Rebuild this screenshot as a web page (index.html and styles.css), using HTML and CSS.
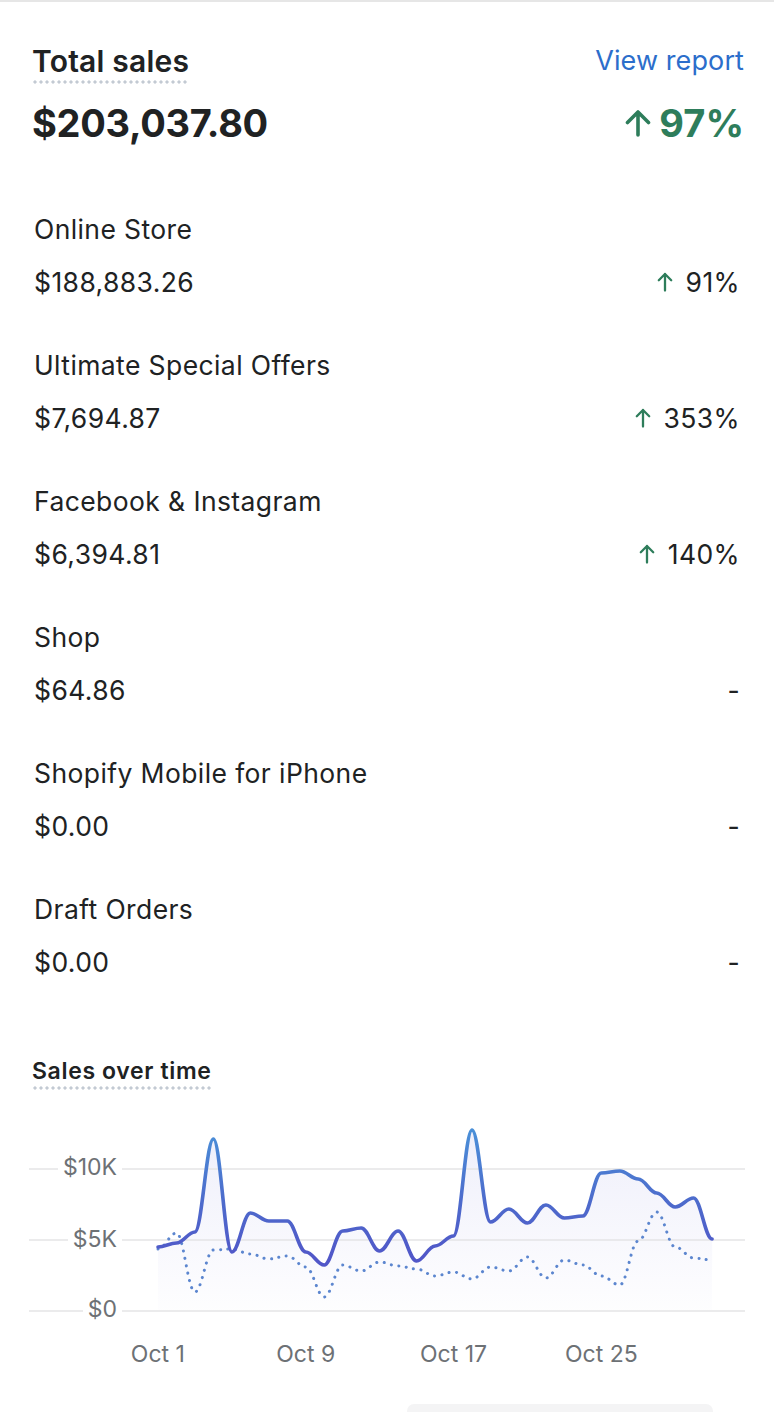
FILE: index.html
```html
<!DOCTYPE html>
<html lang="en">
<head>
<meta charset="utf-8">
<title>Total sales</title>
<link rel="stylesheet" href="styles.css">
</head>
<body>
<div class="topline"></div>
<main class="card">
  <header class="summary">
    <div class="summary-row">
      <h2 class="title dotted">Total sales</h2>
      <a class="link" href="#">View report</a>
    </div>
    <div class="summary-row total-row">
      <span class="total">$203,037.80</span>
      <span class="change-big">
        <svg class="arrow-big" viewBox="0 0 26 28" aria-hidden="true"><path d="M13 26V3M2.5 13.5L13 3l10.5 10.5" fill="none" stroke="currentColor" stroke-width="3.6" stroke-linecap="round" stroke-linejoin="round"/></svg>97%
      </span>
    </div>
  </header>

  <ul class="channels">
    <li class="channel">
      <div class="channel-name">Online Store</div>
      <div class="channel-row"><span>$188,883.26</span><span class="delta"><svg class="arrow" viewBox="0 0 16 20" aria-hidden="true"><path d="M8 18.5V2M1.8 8.2L8 2l6.2 6.2" fill="none" stroke="currentColor" stroke-width="2.3" stroke-linecap="round" stroke-linejoin="round"/></svg>91%</span></div>
    </li>
    <li class="channel">
      <div class="channel-name">Ultimate Special Offers</div>
      <div class="channel-row"><span>$7,694.87</span><span class="delta"><svg class="arrow" viewBox="0 0 16 20" aria-hidden="true"><path d="M8 18.5V2M1.8 8.2L8 2l6.2 6.2" fill="none" stroke="currentColor" stroke-width="2.3" stroke-linecap="round" stroke-linejoin="round"/></svg>353%</span></div>
    </li>
    <li class="channel">
      <div class="channel-name">Facebook &amp; Instagram</div>
      <div class="channel-row"><span>$6,394.81</span><span class="delta"><svg class="arrow" viewBox="0 0 16 20" aria-hidden="true"><path d="M8 18.5V2M1.8 8.2L8 2l6.2 6.2" fill="none" stroke="currentColor" stroke-width="2.3" stroke-linecap="round" stroke-linejoin="round"/></svg>140%</span></div>
    </li>
    <li class="channel">
      <div class="channel-name">Shop</div>
      <div class="channel-row"><span>$64.86</span><span class="delta">-</span></div>
    </li>
    <li class="channel">
      <div class="channel-name">Shopify Mobile for iPhone</div>
      <div class="channel-row"><span>$0.00</span><span class="delta">-</span></div>
    </li>
    <li class="channel">
      <div class="channel-name">Draft Orders</div>
      <div class="channel-row"><span>$0.00</span><span class="delta">-</span></div>
    </li>
  </ul>

  <section class="chart">
    <h3 class="chart-title dotted">Sales over time</h3>
    <div class="plot">
      <svg class="plot-svg" viewBox="0 0 716 200" width="716" height="200" aria-hidden="true">
        <defs>
          <linearGradient id="fillGrad" gradientUnits="userSpaceOnUse" x1="0" y1="10" x2="0" y2="192">
            <stop offset="0" stop-color="#6d6fd6" stop-opacity="0.11"/>
            <stop offset="1" stop-color="#6d6fd6" stop-opacity="0.01"/>
          </linearGradient>
          <linearGradient id="lineGrad" gradientUnits="userSpaceOnUse" x1="0" y1="10" x2="0" y2="140">
            <stop offset="0" stop-color="#4a90d8"/>
            <stop offset="0.55" stop-color="#4d6bcc"/>
            <stop offset="1" stop-color="#5157c8"/>
          </linearGradient>
        </defs>
        <path class="area" fill="url(#fillGrad)" d="M129,128 C136,128 140.5,124 147.5,124 S158.9,113 165.9,113 S177.4,20 184.4,20 S195.9,133 202.9,133 S214.4,94 221.4,94 S232.8,102 239.8,102 S251.3,102 258.3,102 S269.8,133 276.8,133 S288.2,146 295.2,146 S306.7,112 313.7,112 S325.2,109 332.2,109 S343.6,132 350.6,132 S362.1,112 369.1,112 S380.6,142 387.6,142 S399.1,127 406.1,127 S417.5,117 424.5,117 S436,11 443,11 S454.5,103 461.5,103 S472.9,90 479.9,90 S491.4,104 498.4,104 S509.9,86 516.9,86 S528.3,99 535.3,99 S546.8,97 553.8,97 S565.3,54 572.3,54 S583.8,52 590.8,52 S602.2,60 609.2,60 S620.7,74 627.7,74 S639.2,88 646.2,88 S657.6,79 664.6,79 S676.1,120 683.1,120 L683.1,192 L129,192 Z"/>
        <g class="grid">
          <line x1="0" y1="50" x2="716" y2="50"/>
          <line x1="0" y1="121" x2="716" y2="121"/>
          <line x1="0" y1="192" x2="716" y2="192"/>
        </g>
        <path class="prev" d="M129,130 C136,130 140.5,114 147.5,114 S158.9,173 165.9,173 S177.4,131 184.4,131 S195.9,130 202.9,130 S214.4,135 221.4,135 S232.8,140 239.8,140 S251.3,137 258.3,137 S269.8,148 276.8,148 S288.2,178 295.2,178 S306.7,146 313.7,146 S325.2,152 332.2,152 S343.6,143 350.6,143 S362.1,147 369.1,147 S380.6,150 387.6,150 S399.1,157 406.1,157 S417.5,153 424.5,153 S436,160 443,160 S454.5,148 461.5,148 S472.9,152 479.9,152 S491.4,138 498.4,138 S509.9,159 516.9,159 S528.3,141 535.3,141 S546.8,146 553.8,146 S565.3,157 572.3,157 S583.8,166 590.8,166 S602.2,122 609.2,122 S620.7,93 627.7,93 S639.2,128 646.2,128 S657.6,139 664.6,139 S676.1,141 683.1,141"/>
        <path class="current" stroke="url(#lineGrad)" d="M129,128 C136,128 140.5,124 147.5,124 S158.9,113 165.9,113 S177.4,20 184.4,20 S195.9,133 202.9,133 S214.4,94 221.4,94 S232.8,102 239.8,102 S251.3,102 258.3,102 S269.8,133 276.8,133 S288.2,146 295.2,146 S306.7,112 313.7,112 S325.2,109 332.2,109 S343.6,132 350.6,132 S362.1,112 369.1,112 S380.6,142 387.6,142 S399.1,127 406.1,127 S417.5,117 424.5,117 S436,11 443,11 S454.5,103 461.5,103 S472.9,90 479.9,90 S491.4,104 498.4,104 S509.9,86 516.9,86 S528.3,99 535.3,99 S546.8,97 553.8,97 S565.3,54 572.3,54 S583.8,52 590.8,52 S602.2,60 609.2,60 S620.7,74 627.7,74 S639.2,88 646.2,88 S657.6,79 664.6,79 S676.1,120 683.1,120"/>
      </svg>
      <span class="ylabel y10">$10K</span>
      <span class="ylabel y5">$5K</span>
      <span class="ylabel y0">$0</span>
    </div>
    <div class="xaxis">
      <span>Oct 1</span>
      <span>Oct 9</span>
      <span>Oct 17</span>
      <span>Oct 25</span>
    </div>
  </section>
  <div class="bottom-row"><div class="bottom-bar"></div></div>
</main>
</body>
</html>
```

FILE: styles.css
```css
* { box-sizing: border-box; }

html, body {
  margin: 0;
  padding: 0;
  background: #ffffff;
}

body {
  font-family: Inter, "Noto Sans", "Liberation Sans", sans-serif;
  color: #202223;
  width: 774px;
  height: 1412px;
  overflow: hidden;
}

.topline {
  height: 2px;
  background: #e6e6e6;
}

.card {
  padding: 42px 30px 0 32px;
}

.summary-row {
  display: flex;
  justify-content: space-between;
  align-items: center;
}

.dotted {
  background-image: radial-gradient(circle, #c3cad3 1.4px, transparent 1.8px);
  background-size: 6px 4px;
  background-repeat: repeat-x;
  background-position: 0 100%;
}

.title {
  margin: 0;
  font-size: 30px;
  font-weight: 600;
  line-height: 34px;
  padding-bottom: 6px;
  letter-spacing: 0.2px;
}

.link {
  color: #2c6ecb;
  text-decoration: none;
  font-size: 27px;
  line-height: 34px;
  margin-bottom: 6px;
  letter-spacing: 0.1px;
}

.total-row {
  margin-top: 17px;
}

.total {
  font-size: 38px;
  font-weight: 700;
  line-height: 44px;
  letter-spacing: -0.3px;
}

.change-big {
  display: flex;
  align-items: center;
  gap: 8px;
  color: #2e7d5b;
  font-size: 38px;
  font-weight: 700;
  line-height: 44px;
}

.arrow-big {
  width: 26px;
  height: 28px;
}

.channels {
  list-style: none;
  margin: 67px 4px 0 2px;
  padding: 0;
  display: flex;
  flex-direction: column;
  gap: 49px;
}

.channel-name,
.channel-row {
  font-size: 26.5px;
  line-height: 34px;
  letter-spacing: 0.4px;
}

.channel-row {
  margin-top: 19px;
  display: flex;
  justify-content: space-between;
  align-items: center;
}

.delta {
  display: flex;
  align-items: center;
  gap: 13px;
}

.arrow {
  width: 16px;
  height: 20px;
  color: #2e7d5b;
}

.chart {
  margin-top: 78px;
}

.chart-title {
  display: inline-block;
  margin: 0;
  font-size: 23px;
  font-weight: 600;
  line-height: 28px;
  padding-bottom: 5px;
  letter-spacing: 0.65px;
}

.plot {
  position: relative;
  margin: 29px 0 0 -3px;
  width: 716px;
  height: 200px;
}

.plot-svg {
  display: block;
}

.grid line {
  stroke: #e4e4e6;
  stroke-width: 1.6;
}

.prev {
  fill: none;
  stroke: #5c86cf;
  stroke-width: 3;
  stroke-linecap: round;
  stroke-dasharray: 0.1 7.4;
}

.current {
  fill: none;
  stroke-width: 3.6;
  stroke-linecap: round;
  stroke-linejoin: round;
}

.ylabel {
  position: absolute;
  right: calc(100% - 93px);
  padding: 0 5px;
  background: #ffffff;
  color: #6d7175;
  font-size: 23px;
  line-height: 28px;
}

.y10 { top: 34px; }
.y5 { top: 106px; }
.y0 { top: 176px; }

.xaxis {
  display: grid;
  grid-template-columns: repeat(4, 147.8px);
  margin: 21px 0 0 52px;
  color: #6d7175;
  font-size: 23px;
  line-height: 28px;
  text-align: center;
}

.bottom-row {
  display: flex;
  justify-content: flex-end;
  padding-right: 31px;
  margin-top: 36px;
}

.bottom-bar {
  width: 306px;
  height: 24px;
  background: #f4f4f5;
  border-radius: 7px 7px 0 0;
}
```
